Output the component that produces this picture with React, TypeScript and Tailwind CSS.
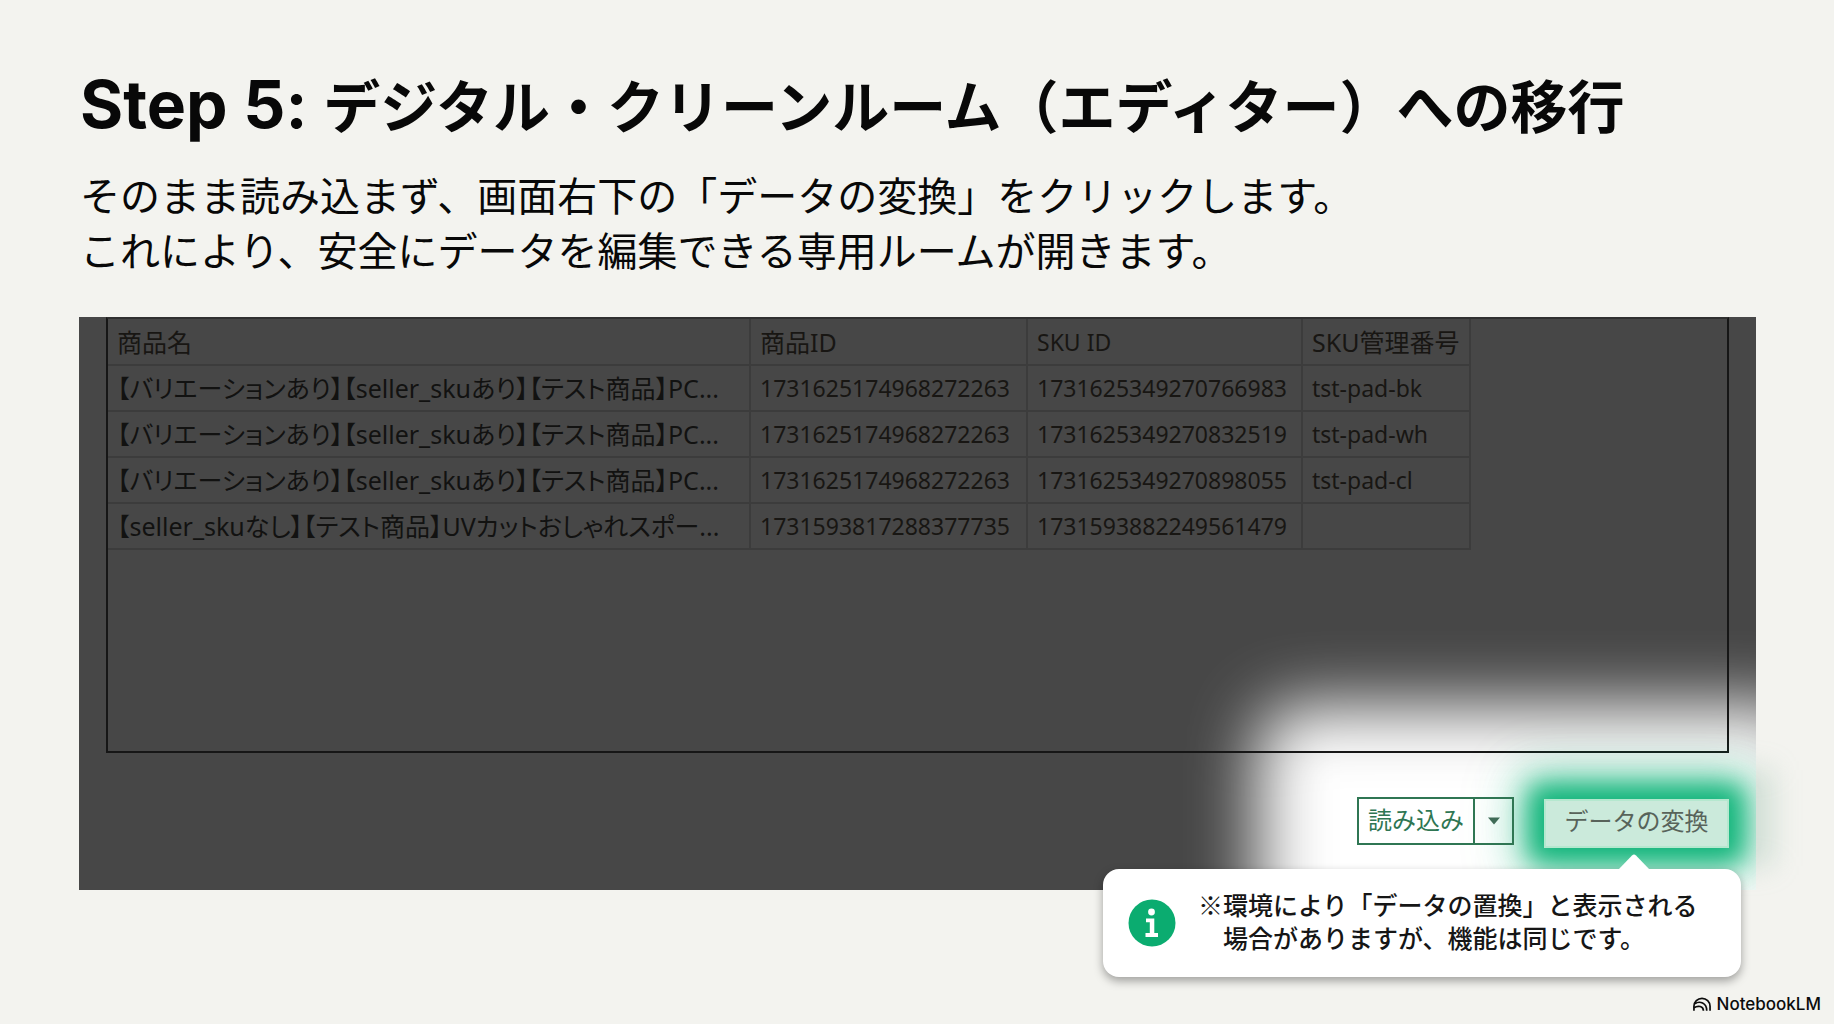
import { clsx } from "clsx"

interface ProductRow {
  name: string
  productId: string
  skuId: string
  skuCode: string
}

const rows: ProductRow[] = [
  {
    name: "【バリエーションあり】【seller_skuあり】【テスト商品】PC...",
    productId: "1731625174968272263",
    skuId: "1731625349270766983",
    skuCode: "tst-pad-bk",
  },
  {
    name: "【バリエーションあり】【seller_skuあり】【テスト商品】PC...",
    productId: "1731625174968272263",
    skuId: "1731625349270832519",
    skuCode: "tst-pad-wh",
  },
  {
    name: "【バリエーションあり】【seller_skuあり】【テスト商品】PC...",
    productId: "1731625174968272263",
    skuId: "1731625349270898055",
    skuCode: "tst-pad-cl",
  },
  {
    name: "【seller_skuなし】【テスト商品】UVカットおしゃれスポー...",
    productId: "1731593817288377735",
    skuId: "1731593882249561479",
    skuCode: "",
  },
]

const columns = [
  { label: "商品名", width: "w-[642px]" },
  { label: "商品ID", width: "w-[277px]" },
  { label: "SKU ID", width: "w-[275px]" },
  { label: "SKU管理番号", width: "w-[168px]" },
]

function ProductTable() {
  return (
    <table className="table-fixed border-collapse font-['Noto_Sans','Noto_Sans_CJK_JP',sans-serif] text-[23px] leading-7 text-[#181613] [font-feature-settings:'palt']">
      <thead>
        <tr className="h-[46px]">
          {columns.map((column) => (
            <th
              key={column.label}
              className={clsx(
                "border-r-2 border-b-2 border-[#3c3c3c] px-[9px] text-left font-normal whitespace-nowrap",
                column.label !== "SKU ID" && "text-[25px]",
                column.width
              )}
            >
              {column.label}
            </th>
          ))}
        </tr>
      </thead>
      <tbody>
        {rows.map((row) => (
          <tr key={row.skuId} className="h-[46px]">
            {[row.name, row.productId, row.skuId, row.skuCode].map((cell, i) => (
              <td
                key={columns[i].label}
                className={clsx(
                  "border-r-2 border-b-2 border-[#3c3c3c] px-[9px] whitespace-nowrap",
                  i === 0 && "text-[25px] text-[#121211]"
                )}
              >
                {cell}
              </td>
            ))}
          </tr>
        ))}
      </tbody>
    </table>
  )
}

function ActionBar() {
  return (
    <div className="flex items-start justify-end gap-[30px] pr-[27px] text-2xl">
      <div className="relative z-10 flex h-12 border-2 border-[#2f7653] text-[#2f7653]">
        <button type="button" className="w-[116px] border-r-2 border-[#2f7653] pb-1">
          読み込み
        </button>
        <button type="button" aria-label="読み込みオプション" className="grid w-[37px] place-items-center">
          <svg width="12" height="8" viewBox="0 0 12 8" fill="#3f6b57">
            <path d="M0 0.5h12L6 7.5z" />
          </svg>
        </button>
      </div>
      <button
        type="button"
        className="mt-0.5 h-[49px] w-[185px] border-2 border-[#b5e8cf] bg-[#cbeadb] pb-2 text-[#58635a] shadow-[0_0_24px_12px_#12b57b,0_0_40px_20px_rgba(18,181,123,0.6),0_0_60px_30px_rgba(18,181,123,0.15)]"
      >
        データの変換
      </button>
    </div>
  )
}

function Callout() {
  return (
    <aside className="absolute right-[15px] -bottom-[87px] flex h-[108px] w-[638px] items-center rounded-2xl bg-white pl-[25px] shadow-[0_4px_10px_rgba(0,0,0,0.35)]">
      <svg
        className="absolute -top-[15px] right-[91px]"
        width="32"
        height="16"
        viewBox="0 0 32 16"
        fill="white"
      >
        <path d="M0 16L14 1.5Q16 -0.5 18 1.5L32 16z" />
      </svg>
      <svg width="48" height="48" viewBox="0 0 48 48" className="shrink-0">
        <circle cx="24" cy="24" r="23.5" fill="#0bac70" />
        <circle cx="23.5" cy="13" r="3.4" fill="white" />
        <path d="M18 19.5h8.3V34H30v4H17.5v-4h4.3V23.3H18z" fill="white" />
      </svg>
      <p className="ml-[22px] pb-1 text-[25px] leading-[33px] font-medium whitespace-pre text-[#161616]">
        {"※環境により「データの置換」と表示される\n　場合がありますが、機能は同じです。"}
      </p>
    </aside>
  )
}

export default function App() {
  return (
    <main className="flex min-h-screen flex-col bg-[#f3f3ef] font-['Noto_Sans_CJK_JP',sans-serif] text-[#080808]">
      <header className="px-20 pt-[63px]">
        <h1 className="text-[57px] leading-20 font-bold whitespace-nowrap">
          <span className="font-['Inter',sans-serif] text-[66px] [font-feature-settings:'calt'_0]">Step 5: </span>
          デジタル・クリーンルーム（エディター）への移行
        </h1>
        <p className="mt-[23px] text-[40px] leading-[55px]">
          そのまま読み込まず、画面右下の「データの変換」をクリックします。
          <br />
          これにより、安全にデータを編集できる専用ルームが開きます。
        </p>
      </header>

      <section className="relative mt-10 mr-[78px] ml-[79px]">
        {/* faint halo that spills past the panel's right edge */}
        <div className="absolute -right-4 bottom-6 h-24 w-12 bg-[#7fae99]/30 blur-[14px]" />
        <div className="relative h-[573px] overflow-hidden bg-[#474747]">
          {/* spotlight around the action buttons */}
          <div className="absolute top-[389px] -right-[60px] -bottom-[100px] w-[558px] rounded-[40px] bg-white blur-[34px]" />
          <div className="relative">
            <div className="mx-[27px] h-[436px] border-2 border-[#161616] border-t-[#303030]">
              <ProductTable />
            </div>
            <div className="pt-11">
              <ActionBar />
            </div>
          </div>
        </div>
        <Callout />
      </section>

      <footer className="mt-auto flex items-center justify-end gap-1.5 pr-[13px] pb-2 font-['Inter',sans-serif] text-[17px] leading-6 font-medium text-[#0c0c0c]">
        <svg width="18" height="14" viewBox="0 0 19 14" fill="none" stroke="currentColor" strokeWidth="1.8">
          <path d="M1 14V9.500a8.500 8.500 0 0 1 17 0V14" />
          <path d="M2 6.800C7 3.200 14.500 6 14.500 14" />
          <path d="M1 11c4.500-3 10-1.500 10 3" />
        </svg>
        NotebookLM
      </footer>
    </main>
  )
}
